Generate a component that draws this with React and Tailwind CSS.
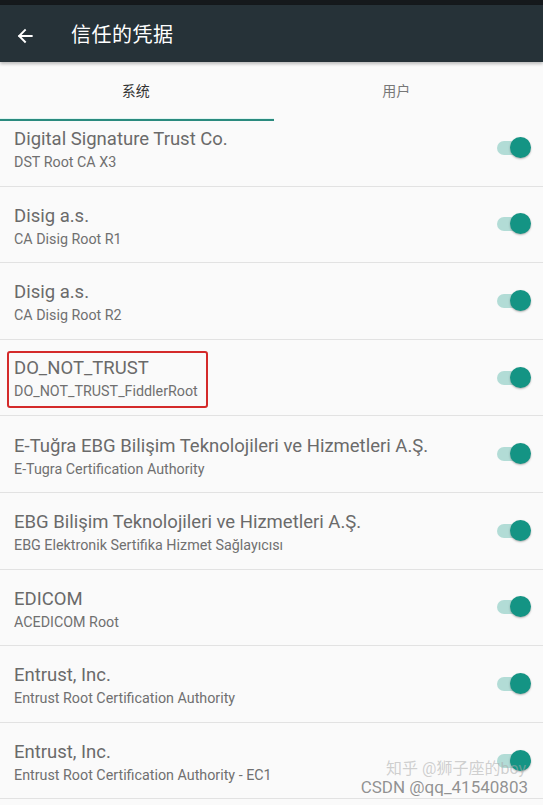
import React from "react";

const rows = [
  ["Digital Signature Trust Co.", "DST Root CA X3"],
  ["Disig a.s.", "CA Disig Root R1"],
  ["Disig a.s.", "CA Disig Root R2"],
  ["DO_NOT_TRUST", "DO_NOT_TRUST_FiddlerRoot", true],
  ["E-Tuğra EBG Bilişim Teknolojileri ve Hizmetleri A.Ş.", "E-Tugra Certification Authority"],
  ["EBG Bilişim Teknolojileri ve Hizmetleri A.Ş.", "EBG Elektronik Sertifika Hizmet Sağlayıcısı"],
  ["EDICOM", "ACEDICOM Root"],
  ["Entrust, Inc.", "Entrust Root Certification Authority"],
  ["Entrust, Inc.", "Entrust Root Certification Authority - EC1"],
];

function Toggle() {
  return (
    <div className="relative w-[34px] h-[22px] flex items-center shrink-0">
      <div className="w-[32px] h-[14px] rounded-full bg-[#b2dcd6]" />
      <div className="absolute right-0 top-0 w-[21px] h-[21px] rounded-full bg-[#149484] shadow-[0_1px_2px_rgba(0,0,0,0.3)]" />
    </div>
  );
}

function Row({ title, sub, boxed }) {
  const text = (
    <div className="flex flex-col">
      <div className="text-[18.5px] leading-[22px] text-[#6a6a6a]">{title}</div>
      <div className="text-[14.3px] leading-[20px] text-[#707070] mt-[2px]">{sub}</div>
    </div>
  );
  return (
    <div className="h-[76.6px] shrink-0 border-b border-[#e2e2e2] flex items-center pl-[14px] pr-[12px] justify-between">
      {boxed ? (
        <div className="-ml-[7px] mt-[3px] pl-[5px] pr-[8px] pt-[4px] pb-[5px] border-2 border-[#d42a2a] rounded-[3px]">{text}</div>
      ) : (
        <div className="pt-[5px]">{text}</div>
      )}
      <Toggle />
    </div>
  );
}

export default function App() {
  return (
    <div
      className="w-[543px] h-[805px] overflow-hidden bg-[#fafafa] flex flex-col relative"
      style={{ fontFamily: "Roboto, 'Noto Sans CJK SC', sans-serif" }}
    >
      <div className="h-[5px] bg-[#15191c] shrink-0" />
      <div className="h-[57px] bg-[#263238] flex items-center shrink-0 relative z-10 shadow-[0_2px_3px_rgba(0,0,0,0.25)]">
        <svg width="20" height="20" viewBox="0 0 24 24" className="ml-[15px] mt-[4px]" fill="none">
          <path d="M20 12H5M12 5l-7 7 7 7" stroke="#ffffff" strokeWidth="2.3" strokeLinecap="square" />
        </svg>
        <div className="ml-[36px] mt-[3px] text-white text-[20px] tracking-[0.5px]">信任的凭据</div>
      </div>
      <div className="h-[59px] flex shrink-0 bg-[#fafafa]">
        <div className="flex-1 flex flex-col">
          <div className="flex-1 flex items-center justify-center text-[14px] text-[#333] pt-[3px]">系统</div>
          <div className="h-[3px] bg-[#2a8a7e] border-t border-[#e0f5f2] mr-[-2px]" />
        </div>
        <div className="flex-1 flex flex-col">
          <div className="flex-1 flex items-center justify-center text-[14px] text-[#777] pr-[22px] pt-[3px]">用户</div>
          <div className="h-[3px]" />
        </div>
      </div>
      <div className="flex-1 overflow-hidden">
        <div className="flex flex-col -mt-[11px]">
          {rows.map(([t, s, b], i) => (
            <Row key={i} title={t} sub={s} boxed={b} />
          ))}
        </div>
      </div>
      <div className="absolute right-[15px] bottom-[8px] flex flex-col items-end pointer-events-none">
        <div className="text-[16px] leading-[18px] text-[rgba(170,170,170,0.55)] mr-[2px]">知乎 @狮子座的boy</div>
        <div className="text-[17px] leading-[19px] text-[rgba(110,110,110,0.75)]">CSDN @qq_41540803</div>
      </div>
    </div>
  );
}
